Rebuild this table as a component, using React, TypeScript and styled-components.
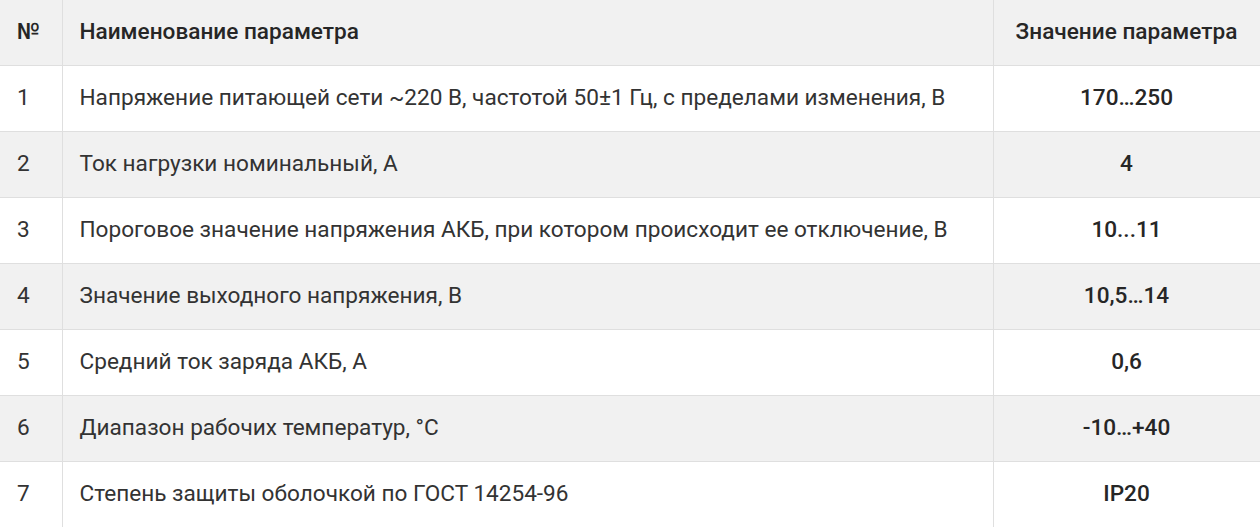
import React from 'react';
import styled, { createGlobalStyle } from 'styled-components';

const GlobalStyle = createGlobalStyle`
  html, body {
    margin: 0;
    padding: 0;
    background: #fff;
    overflow: hidden;
  }
  body {
    font-family: Roboto, "Liberation Sans", Arial, sans-serif;
    color: #2b2b2b;
  }
`;

const Table = styled.table`
  width: 1260px;
  border-collapse: collapse;
  table-layout: fixed;
  font-size: 22.6px;
  line-height: 26px;
`;

const Row = styled.tr<{ $shade?: boolean }>`
  height: 66px;
  background: ${(p) => (p.$shade ? '#f1f1f1' : '#fff')};
`;

const HeadRow = styled.tr`
  height: 65px;
  background: #f1f1f1;
`;

const Cell = styled.td<{ $center?: boolean; $bold?: boolean }>`
  border: 1px solid #dfdfdf;
  padding: 0 17px;
  text-align: ${(p) => (p.$center ? 'center' : 'left')};
  font-weight: ${(p) => (p.$bold ? 500 : 400)};
  color: ${(p) => (p.$bold ? '#262626' : '#333')};
  vertical-align: middle;
  white-space: nowrap;

  &:first-child {
    border-left: none;
  }
`;

const HeadCell = styled.th<{ $center?: boolean }>`
  border: 1px solid #dfdfdf;
  border-top: none;
  padding: 0 17px;
  text-align: ${(p) => (p.$center ? 'center' : 'left')};
  font-weight: 500;
  color: #262626;
  vertical-align: middle;

  &:first-child {
    border-left: none;
  }
`;

const rows = [
  ['Напряжение питающей сети ~220 В, частотой 50±1 Гц, с пределами изменения, В', '170…250'],
  ['Ток нагрузки номинальный, А', '4'],
  ['Пороговое значение напряжения АКБ, при котором происходит ее отключение, В', '10...11'],
  ['Значение выходного напряжения, В', '10,5…14'],
  ['Средний ток заряда АКБ, А', '0,6'],
  ['Диапазон рабочих температур, °С', '-10…+40'],
  ['Степень защиты оболочкой по ГОСТ 14254-96', 'IP20'],
];

export default function App() {
  return (
    <>
      <GlobalStyle />
      <Table>
        <colgroup>
          <col style={{ width: 62 }} />
          <col style={{ width: 931 }} />
          <col style={{ width: 267 }} />
        </colgroup>
        <thead>
          <HeadRow>
            <HeadCell>№</HeadCell>
            <HeadCell>Наименование параметра</HeadCell>
            <HeadCell $center>Значение параметра</HeadCell>
          </HeadRow>
        </thead>
        <tbody>
          {rows.map(([name, value], i) => (
            <Row key={i} $shade={i % 2 === 1}>
              <Cell>{i + 1}</Cell>
              <Cell>{name}</Cell>
              <Cell $center $bold>{value}</Cell>
            </Row>
          ))}
        </tbody>
      </Table>
    </>
  );
}
